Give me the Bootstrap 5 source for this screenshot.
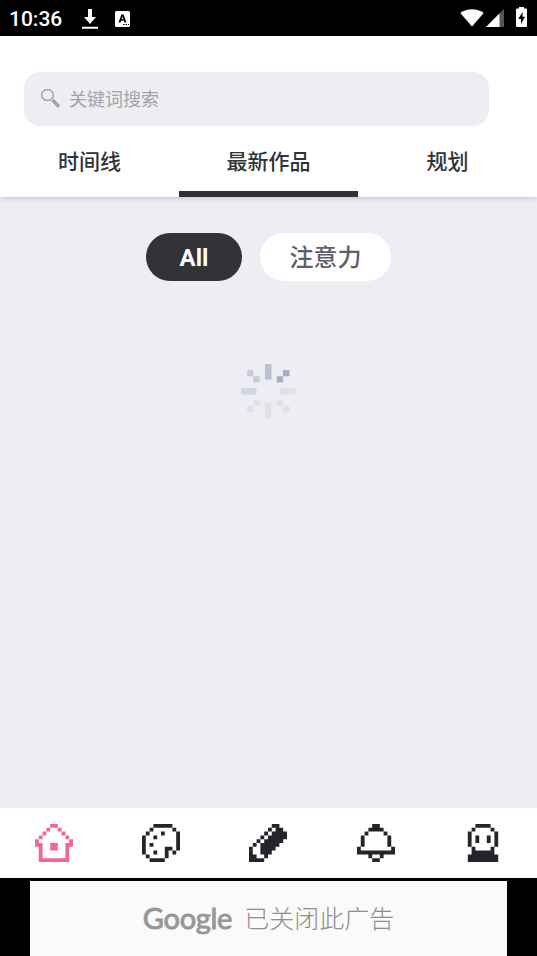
<!DOCTYPE html>
<html lang="zh-CN">
<head>
<meta charset="utf-8">
<meta name="viewport" content="width=device-width, initial-scale=1">
<title>最新作品</title>
<link href="https://cdn.jsdelivr.net/npm/bootstrap@5.3.0/dist/css/bootstrap.min.css" rel="stylesheet">
<style>
html,body{height:100%}
body{font-family:Roboto,"Noto Sans CJK SC",sans-serif;color:#323336;background:#eeedf4;overflow:hidden}
svg{display:block;flex:none}
.status{height:36px;background:#000;color:#fff;font-size:21px;font-weight:500;line-height:36px;padding:1px 0 0 9px}
.status-time{width:73px}
.status-app{margin-left:17px}
.status-right{padding-right:10px}
.status-signal{margin-left:2px}
.status-battery{margin-left:12px;margin-top:-2px}
.top{height:161px;padding-top:36px;box-shadow:0 1px 5px rgba(60,60,80,.25);z-index:1}
.search{height:53.5px;width:465px;margin-left:24px;padding-left:17px;border-radius:16px;background:#eeedf4;color:#a3a3a3;font-size:18px}
.search-hint{margin-left:9px;padding-top:2px}
.tabs .nav-link{height:71.5px;padding:0;border-bottom:6px solid transparent;color:#323336;font-size:21px;font-weight:500;line-height:31px;padding-top:21.5px}
.tabs .nav-link.active{border-color:#323336}
.filters{padding-top:36px;gap:18px}
.filters .btn{height:48px;border:0;font-size:24px;line-height:51px;padding:0}
.pill-all{width:96px;background:#323336;color:#fff;font-weight:700}
.pill-follow{width:131px;background:#fff;color:#5c606c;font-weight:500}
.loader{margin-top:83px}
.bottom{height:70px}
.pix{fill:none;stroke:#24252a}
.pix.on{stroke:#f3659a}
.ad-wrap{height:78px;background:#000;padding:3px 30px 0}
.ad{background:#fafafa;color:#8e8e8e;font-size:25px;font-weight:300;padding-bottom:2px;font-family:"Noto Sans CJK SC",sans-serif}
.brand-word{font-family:Lato,sans-serif;font-weight:400;-webkit-text-stroke:.9px #979797;color:#979797;font-size:29px;letter-spacing:-.3px;margin-right:12px}
</style>
</head>
<body class="d-flex flex-column">
<div class="status d-flex align-items-center">
  <div class="status-time">10:36</div>
  <svg width="16" height="20" viewBox="0 0 16 20" fill="#fff"><path d="M6 0h4v8h4l-6 7-6-7h4zM0 17.7h16v2H0z"/></svg>
  <svg class="status-app" width="15" height="16" viewBox="0 0 15 16"><rect width="15" height="16" rx="1.5" fill="#fff"/><path d="M3.5 11.5 6.4 3.5H8.6L11.5 11.5H9.5L8.9 9.8H6.1L5.5 11.5zM6.6 8.2H8.4L7.5 5.6z" fill="#000"/><path d="M8 13.5h1.5m1 0H12m1 0h1" stroke="#000"/></svg>
  <div class="status-right d-flex ms-auto">
    <svg width="24" height="20" viewBox="0 0 24 20"><path d="M.3 4C7-1 17-1 23.7 4L12 17.5z" fill="#fff"/></svg>
    <svg class="status-signal" width="18" height="20" viewBox="0 0 18 20"><path d="M18 0v18H0z" fill="#555"/><path d="M13.5 4.5V18H0z" fill="#fff"/></svg>
    <svg class="status-battery" width="11" height="20" viewBox="0 0 11 20"><path d="M3 0h5v1.5h2Q11 1.5 11 2.5V19Q11 20 10 20H1Q0 20 0 19V2.5Q0 1.5 1 1.5h2z" fill="#fff"/><path d="M6.5 5 2.3 12H5v5l4-7.2H6.5z" fill="#000"/></svg>
  </div>
</div>
<header class="top bg-white position-relative">
  <div class="search d-flex align-items-center">
    <svg width="19" height="19" viewBox="0 0 19 19" fill="none" stroke="#a3a3a3"><path d="M4 .8h5L12.2 4v4L9 11.2H4L.8 8V4z" stroke-width="1.4"/><path d="m11.5 11 6.5 6.7" stroke-width="3.4"/></svg>
    <span class="search-hint">关键词搜索</span>
  </div>
  <nav class="tabs nav nav-fill flex-nowrap row g-0">
    <a class="nav-link col-4" href="#">时间线</a>
    <a class="nav-link col-4 active" href="#">最新作品</a>
    <a class="nav-link col-4" href="#">规划</a>
  </nav>
</header>
<main class="flex-grow-1">
  <div class="filters d-flex justify-content-center">
    <button class="btn rounded-pill pill-all">All</button>
    <button class="btn rounded-pill pill-follow">注意力</button>
  </div>
  <svg class="loader mx-auto" width="54.5" height="54.5" viewBox="0 0 54.5 54.5">
    <path fill="#b8c0d1" d="M24 0h6.5v15.5H24z"/>
    <path fill="#a6b0c5" d="M42 6h6.5v6.3H42zM35.8 12.3h6.3v6.3h-6.3z"/>
    <path fill="#c7cddb" d="M6 6h6.3v6.3H6zM12.3 12.3h6.3v6.3h-6.3z"/>
    <path fill="#d1d7e2" d="M0 24h15.5v6.5H0z"/>
    <path fill="#dde1e9" d="M39 24h15.5v6.5H39zM24 39h6.5v15.5H24zM6 42h6.3v6.3H6zM42.2 42h6.3v6.3h-6.3zM35.8 36h6.3v6.3h-6.3z"/>
    <path fill="#e0e2e8" d="M12.3 36h6.3v6.3h-6.3z"/>
  </svg>
</main>
<nav class="bottom row g-0 row-cols-5 bg-white align-items-center">
  <a class="col d-flex justify-content-center" href="#" aria-label="首页"><svg class="pix on" width="38" height="38" viewBox="0 0 10 10"><path d="M4 .5h2M3 1.5h1m2 0h1M2 2.5h1m4 0h1M1 3.5h1m6 0h1M0 4.5h1m8 0h1M0 5.5h2m2 0h2m2 0h2M1 6.5h1m2 0h2m2 0h1M1 7.5h1m6 0h1M1 8.5h1m6 0h1M1 9.5h8"/></svg></a>
  <a class="col d-flex justify-content-center" href="#" aria-label="画廊"><svg class="pix" width="38" height="38" viewBox="0 0 10 10"><path d="M3 .5h5M2 1.5h1m5 0h1M1 2.5h1m3 0h1m3 0h1M0 3.5h1m2 0h1m5 0h1M0 4.5h1m8 0h1M0 5.5h1m1 0h1m6 0h1M0 6.5h1m5 0h2m1 0h1M0 7.5h1m2 0h1m2 0h1m1 0h1M1 8.5h1m4 0h1M2 9.5h4"/></svg></a>
  <a class="col d-flex justify-content-center" href="#" aria-label="绘制"><svg class="pix" width="38" height="38" viewBox="0 0 10 10"><path d="M6 .5h2M5 1.5h1m1 0h2M4 2.5h1m1 0h4M3 3.5h1m1 0h5M2 4.5h1m1 0h5M1 5.5h1m1 0h5M0 6.5h1m2 0h4M0 7.5h1m2 0h3M0 8.5h2m2 0h1M0 9.5h4"/></svg></a>
  <a class="col d-flex justify-content-center" href="#" aria-label="通知"><svg class="pix" width="38" height="38" viewBox="0 0 10 10"><path d="M4 .5h2M3 1.5h4M2 2.5h1m4 0h1M1 3.5h1m6 0h1M1 4.5h1m6 0h1M1 5.5h1m6 0h1M0 6.5h1m8 0h1M0 7.5h10M3 8.5h1m2 0h1M4 9.5h2"/></svg></a>
  <a class="col d-flex justify-content-center" href="#" aria-label="我的"><svg class="pix" width="38" height="38" viewBox="0 0 10 10"><path d="M3 .5h4M2 1.5h1m4 0h1M1 2.5h1m6 0h1M1 3.5h1m1 0h1m2 0h1m1 0h1M1 4.5h1m1 0h1m2 0h1m1 0h1M1 5.5h1m6 0h1M2 6.5h1m4 0h1M2 7.5h6M1 8.5h8M1 9.5h8"/></svg></a>
</nav>
<div class="ad-wrap d-flex">
  <div class="ad flex-grow-1 d-flex align-items-center justify-content-center"><span class="brand-word">Google</span><span>已关闭此广告</span></div>
</div>
<script src="https://cdn.jsdelivr.net/npm/bootstrap@5.3.0/dist/js/bootstrap.bundle.min.js"></script>
</body>
</html>
